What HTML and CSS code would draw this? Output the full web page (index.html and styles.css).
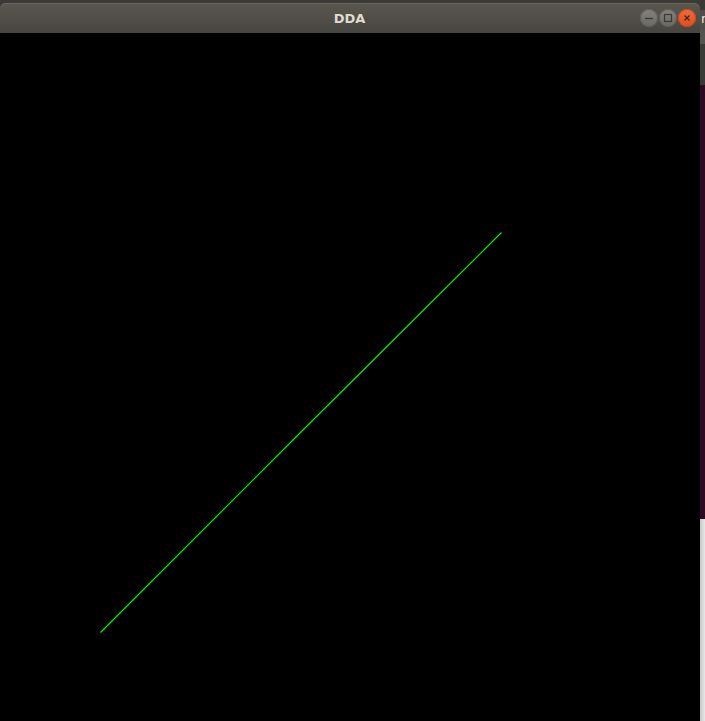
FILE: index.html
```html
<!DOCTYPE html>
<html>
<head>
<meta charset="utf-8">
<link rel="stylesheet" href="styles.css">
</head>
<body>
<div class="desktop">
  <div class="window">
    <div class="titlebar">
      <span class="title">DDA</span>
      <div class="controls">
        <span class="btn btn-min"><svg width="18" height="18" viewBox="0 0 18 18"><line x1="5" y1="9.5" x2="13" y2="9.5" stroke="#3a3935" stroke-width="1.3"/></svg></span>
        <span class="btn btn-max"><svg width="18" height="18" viewBox="0 0 18 18"><rect x="5.5" y="5.5" width="7" height="7" fill="none" stroke="#3a3935" stroke-width="1.2"/></svg></span>
        <span class="btn btn-close"><svg width="18" height="18" viewBox="0 0 18 18"><path d="M6.5 6.5 L11.5 11.5 M11.5 6.5 L6.5 11.5" stroke="#3a2a22" stroke-width="1.3"/></svg></span>
      </div>
    </div>
    <div class="canvas">
      <svg class="plot" width="700" height="688" viewBox="0 0 700 688">
        <path d="M100.5 599.5 L300.5 399.5 L501.5 199.5" fill="none" stroke="#00ff00" stroke-width="1.1"/>
      </svg>
    </div>
  </div>
  <div class="behind">
    <div class="b-top"></div>
    <div class="b-menu"><span class="b-letter">r</span></div>
    <div class="b-tab"></div>
    <div class="b-dark"></div>
    <div class="b-purple"></div>
    <div class="b-light"></div>
  </div>
</div>
</body>
</html>
```
FILE: styles.css
```css
html, body {
  margin: 0;
  padding: 0;
  background: #000;
}
.desktop {
  width: 705px;
  height: 721px;
  display: flex;
  background: #3b3a36;
  overflow: hidden;
}
.window {
  width: 700px;
  margin-top: 3px;
  display: flex;
  flex-direction: column;
  flex: none;
}
.titlebar {
  height: 30px;
  flex: none;
  position: relative;
  display: flex;
  align-items: center;
  justify-content: center;
  border-radius: 6px 6px 0 0;
  background: linear-gradient(#5a574f, #47453f);
  box-shadow: inset 0 1px 0 #6a675f;
}
.title {
  font-family: "DejaVu Sans", sans-serif;
  font-weight: bold;
  font-size: 13px;
  color: #dfdbd2;
  margin-left: -1px;
  margin-top: 1px;
}
.controls {
  position: absolute;
  right: 4px;
  top: 6px;
  display: flex;
  gap: 1px;
}
.btn {
  width: 18px;
  height: 18px;
  border-radius: 50%;
  display: block;
}
.btn svg { display: block; }
.btn-min, .btn-max {
  background: linear-gradient(#85837c, #6a6862);
  box-shadow: inset 0 0 0 1px #5e5c56;
}
.btn-close {
  background: linear-gradient(#f26a3c, #e14d1e);
  box-shadow: inset 0 0 0 1px #c9461d;
}
.canvas {
  flex: 1;
  background: #000;
}
.plot { display: block; }
.behind {
  width: 5px;
  flex: none;
  display: flex;
  flex-direction: column;
}
.b-top { height: 10px; background: #3b3a36; }
.b-menu {
  height: 20px;
  background: #504e48;
  overflow: hidden;
  position: relative;
}
.b-letter {
  position: absolute;
  left: 1px;
  top: 1px;
  font-family: "DejaVu Sans", sans-serif;
  font-size: 13px;
  color: #e6e3dd;
}
.b-tab { height: 14px; background: #55544f; }
.b-dark { height: 41px; background: #3a3936; }
.b-purple { height: 434px; background: #2d0c22; }
.b-light { flex: 1; background: linear-gradient(90deg, #c8c8c8, #e8e8e8); }
```
